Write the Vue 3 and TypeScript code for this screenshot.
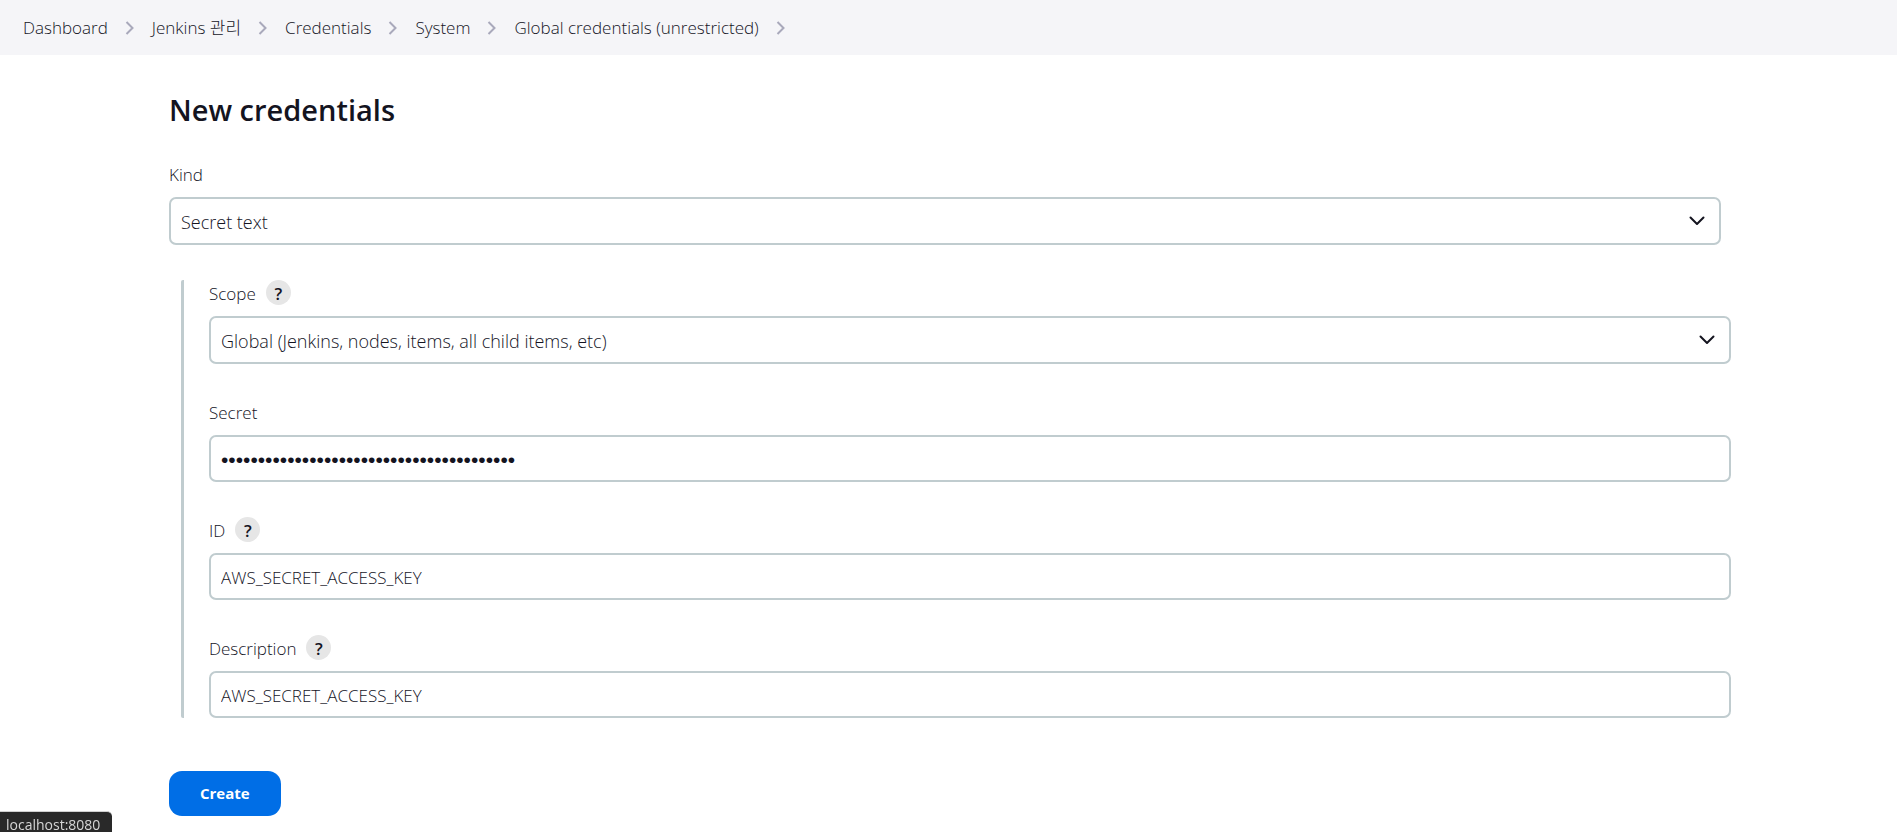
<script setup lang="ts">
import { ref } from 'vue'

const crumbs: string[] = ['Dashboard', 'Jenkins 관리', 'Credentials', 'System', 'Global credentials (unrestricted)']

const kind = ref('Secret text')
const scope = ref('Global (Jenkins, nodes, items, all child items, etc)')
const secret = ref('x'.repeat(40))
const id = ref('AWS_SECRET_ACCESS_KEY')
const description = ref('AWS_SECRET_ACCESS_KEY')
</script>

<template>
  <div class="page">
    <nav class="breadcrumbs" aria-label="Breadcrumb">
      <template v-for="crumb in crumbs" :key="crumb">
        <a class="crumb" href="#">{{ crumb }}</a>
        <svg class="separator" viewBox="0 0 10 14" aria-hidden="true">
          <path d="M1.5 1L7.5 7L1.5 13" />
        </svg>
      </template>
    </nav>

    <main class="content">
      <h1>New credentials</h1>
      <form @submit.prevent>
        <div class="field kind">
          <div class="label-row"><label for="kind">Kind</label></div>
          <div class="select-wrap">
            <select id="kind" v-model="kind" class="control">
              <option>Secret text</option>
            </select>
            <svg class="chevron" viewBox="0 0 16 10" aria-hidden="true"><path d="M1.5 1.5L8 8L14.5 1.5" /></svg>
          </div>
        </div>

        <div class="nested">
          <div class="field">
            <div class="label-row">
              <label for="scope">Scope</label>
              <button class="help" type="button" aria-label="Help for Scope">?</button>
            </div>
            <div class="select-wrap">
              <select id="scope" v-model="scope" class="control">
                <option>Global (Jenkins, nodes, items, all child items, etc)</option>
              </select>
              <svg class="chevron" viewBox="0 0 16 10" aria-hidden="true"><path d="M1.5 1.5L8 8L14.5 1.5" /></svg>
            </div>
          </div>
          <div class="field">
            <div class="label-row"><label for="secret">Secret</label></div>
            <input id="secret" v-model="secret" class="control secret" type="password" autocomplete="off" />
          </div>
          <div class="field">
            <div class="label-row">
              <label for="cred-id">ID</label>
              <button class="help" type="button" aria-label="Help for ID">?</button>
            </div>
            <input id="cred-id" v-model="id" class="control" type="text" />
          </div>
          <div class="field">
            <div class="label-row">
              <label for="description">Description</label>
              <button class="help" type="button" aria-label="Help for Description">?</button>
            </div>
            <input id="description" v-model="description" class="control" type="text" />
          </div>
        </div>

        <button class="create" type="submit">Create</button>
      </form>
    </main>

    <div class="status">localhost:8080</div>
  </div>
</template>

<style>
html,
body {
  height: 100%;
  overflow: hidden;
}
</style>

<style scoped>
.page {
  color: #14141f;
  font-family: "Open Sans", "Noto Sans", "Noto Sans CJK KR", sans-serif;
  font-size: 17px;
  font-weight: 300;
}

.breadcrumbs {
  display: flex;
  align-items: center;
  gap: 17px;
  height: 55px;
  padding: 0 23px;
  background: #f5f5f8;
}

.crumb {
  color: inherit;
  font-size: 17px;
  line-height: 24px;
  text-decoration: none;
  white-space: nowrap;
}

.separator {
  flex: none;
  width: 10px;
  height: 14px;
  fill: none;
  stroke: #a9a9bb;
  stroke-width: 2;
}

.content {
  padding: 35px 166px 16px 169px;
}

h1 {
  margin: 0 0 31px;
  font-size: 29px;
  font-weight: 600;
  line-height: 40px;
}

.kind {
  margin: 0 10px 35px 0;
}

.label-row {
  display: flex;
  align-items: center;
  gap: 10px;
  height: 25px;
  margin-bottom: 11px;
  line-height: 25px;
}

.label-row label {
  padding-top: 2px;
}

.help {
  width: 25px;
  height: 25px;
  padding: 2px 0 0;
  border: 0;
  border-radius: 50%;
  background: #e6e6e6;
  color: #14141f;
  font-family: inherit;
  font-size: 17px;
  font-weight: 600;
  line-height: 23px;
}

.control {
  display: block;
  box-sizing: border-box;
  width: 100%;
  height: 47px;
  margin: 0;
  padding: 2px 10px 0;
  border: 2px solid #c0cccf;
  border-radius: 7px;
  outline: none;
  appearance: none;
  background: #fff;
  color: inherit;
  font: inherit;
}

.secret {
  font-family: "Liberation Sans", sans-serif;
  font-size: 21px;
}

.select-wrap {
  position: relative;
}

.select-wrap .control {
  height: 48px;
  padding: 2px 48px 0 10px;
  font-size: 18px;
}

.chevron {
  position: absolute;
  top: 19px;
  right: 16px;
  width: 16px;
  height: 10px;
  fill: none;
  stroke: #14141f;
  stroke-width: 2;
  stroke-linecap: round;
  stroke-linejoin: round;
  pointer-events: none;
}

.nested {
  display: flex;
  flex-direction: column;
  gap: 35px;
  margin-left: 12px;
  padding-left: 25px;
  border-left: 3px solid #c0cccf;
  border-radius: 2px;
}

.create {
  display: block;
  margin-top: 53px;
  padding: 0 31px;
  border: 0;
  border-radius: 13px;
  background: #006ee6;
  color: #fff;
  font-family: inherit;
  font-size: 15px;
  font-weight: 700;
  line-height: 45px;
}

.status {
  position: fixed;
  bottom: 0;
  left: 0;
  height: 20px;
  padding: 0 12px 0 6px;
  border-top: 1px solid #d0d0d0;
  border-top-right-radius: 5px;
  background: #292929;
  color: #d6d6d6;
  font-size: 14px;
  font-weight: 400;
  line-height: 26px;
}
</style>
